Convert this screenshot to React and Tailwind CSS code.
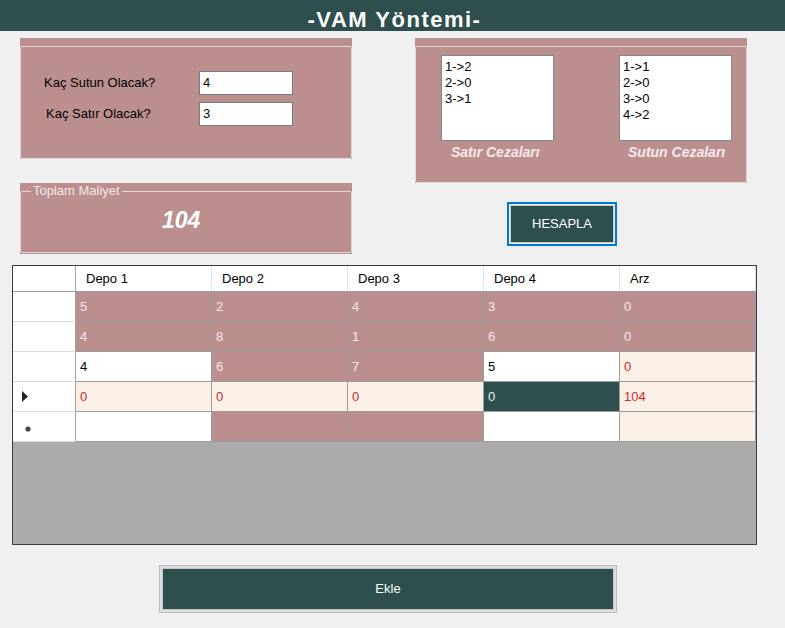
import React from "react";

const rows = [
  [["r", "5"], ["r", "2"], ["r", "4"], ["r", "3"], ["r", "0"]],
  [["r", "4"], ["r", "8"], ["r", "1"], ["r", "6"], ["r", "0"]],
  [["w", "4"], ["r", "6"], ["r", "7"], ["w", "5"], ["l", "0"]],
  [["l", "0"], ["l", "0"], ["l", "0"], ["d", "0"], ["l", "104"]],
  [["w", ""], ["r", ""], ["r", ""], ["w", ""], ["l", ""]],
];

const cellStyle = {
  r: "bg-[#bc8f8f] text-[#f5e9e9]",
  w: "bg-white text-black",
  l: "bg-[#faf0e6] text-[#d0282c]",
  d: "bg-[#2f4f4f] text-[#e6efef]",
};

function Cell({ kind, value }) {
  return (
    <div
      className={
        "w-[136px] h-[30px] shrink-0 border-r border-b border-[#9c9c9c] pl-[4px] flex items-center text-[13px] " +
        cellStyle[kind]
      }
    >
      {value}
    </div>
  );
}

function RowHeader({ mark }) {
  return (
    <div className="w-[63px] h-[30px] shrink-0 bg-white border-r border-r-[#a0a0a0] border-b border-b-[#dcdcdc] flex items-center">
      {mark === "arrow" && (
        <svg width="6" height="11" viewBox="0 0 6 11" className="ml-[9px]">
          <polygon points="0,0 6,5.5 0,11" fill="#222" />
        </svg>
      )}
      {mark === "star" && (
        <svg width="6" height="6" viewBox="0 0 6 6" className="ml-[12px] mt-[4px]">
          <circle cx="3" cy="3" r="2.6" fill="#444" />
        </svg>
      )}
    </div>
  );
}

export default function App() {
  return (
    <div className="w-[785px] h-[628px] bg-[#f0f0f0] font-['Liberation_Sans',Arial,sans-serif] text-[13px] text-black overflow-hidden">
      {/* Title */}
      <div className="h-[31px] bg-[#2f4f4f] flex justify-center">
        <div className="pt-[9px] leading-[22px] text-[22px] font-bold tracking-[1.5px] text-white pl-[4px]">
          -VAM Yöntemi-
        </div>
      </div>

      {/* Top section */}
      <div className="h-[234px] flex pt-[7px] pl-[20px]">
        {/* Left column */}
        <div className="w-[332px] flex flex-col">
          <div className="h-[121px] bg-[#bc8f8f] pt-[8px]">
            <div className="h-full border border-[#e2d6d6] rounded-[2px] pt-[24px] pl-[23px] flex flex-col gap-[7px]">
              <div className="flex items-center h-[24px]">
                <div className="w-[155px]">Kaç Sutun Olacak?</div>
                <div className="w-[94px] h-[24px] bg-white border border-[#7a7a7a] pl-[3px] flex items-center">4</div>
              </div>
              <div className="flex items-center h-[24px]">
                <div className="w-[155px] pl-[2px]">Kaç Satır Olacak?</div>
                <div className="w-[94px] h-[24px] bg-white border border-[#7a7a7a] pl-[3px] flex items-center">3</div>
              </div>
            </div>
          </div>

          <div className="mt-[24px] h-[71px] bg-[#bc8f8f] pt-[8px]">
            <div className="relative h-[62px] border border-[#e2d6d6] rounded-[2px] pt-[14px] pl-[141px]">
              <div className="absolute left-[10px] top-[-9px] px-[2px] bg-[#bc8f8f] text-[#f4e8e8] leading-[16px]">
                Toplam Maliyet
              </div>
              <div className="text-[23px] leading-[28px] font-bold italic text-white">104</div>
            </div>
          </div>
        </div>

        {/* Right column */}
        <div className="ml-[63px] w-[332px] flex flex-col">
          <div className="h-[145px] bg-[#bc8f8f] pt-[8px]">
            <div className="h-full border border-[#e2d6d6] rounded-[2px] pt-[8px] pl-[25px] flex gap-[65px]">
              <div className="flex flex-col">
                <div className="w-[113px] h-[86px] bg-white border border-[#828790] pt-[3px] pl-[3px] leading-[16px]">
                  <div>1-&gt;2</div>
                  <div>2-&gt;0</div>
                  <div>3-&gt;1</div>
                </div>
                <div className="pl-[10px] pt-[3px] text-[14px] leading-[16px] font-bold italic text-[#f7eaea]">
                  Satır Cezaları
                </div>
              </div>
              <div className="flex flex-col">
                <div className="w-[113px] h-[86px] bg-white border border-[#828790] pt-[3px] pl-[3px] leading-[16px]">
                  <div>1-&gt;1</div>
                  <div>2-&gt;0</div>
                  <div>3-&gt;0</div>
                  <div>4-&gt;2</div>
                </div>
                <div className="pl-[9px] pt-[3px] text-[14px] leading-[16px] font-bold italic text-[#f7eaea]">
                  Sutun Cezaları
                </div>
              </div>
            </div>
          </div>

          <div className="mt-[19px] ml-[92px] w-[110px] h-[44px] border-2 border-[#0078d7] p-[1px]">
            <div className="w-full h-full border border-[#c8cccc] bg-[#2f4f4f] flex items-center justify-center text-white">
              HESAPLA
            </div>
          </div>
        </div>
      </div>

      {/* Grid */}
      <div className="ml-[12px] w-[745px] h-[280px] border border-[#3c3c3c] bg-[#ababab] flex flex-col">
        <div className="flex h-[26px] bg-white border-b border-[#a0a0a0]">
          <div className="w-[63px] shrink-0 border-r border-[#a0a0a0]" />
          {["Depo 1", "Depo 2", "Depo 3", "Depo 4", "Arz"].map((h) => (
            <div
              key={h}
              className="w-[136px] shrink-0 border-r border-[#e3e3e3] pl-[10px] flex items-center"
            >
              {h}
            </div>
          ))}
        </div>
        {rows.map((r, i) => (
          <div key={i} className="flex">
            <RowHeader mark={i === 3 ? "arrow" : i === 4 ? "star" : null} />
            {r.map(([k, v], j) => (
              <Cell key={j} kind={k} value={v} />
            ))}
          </div>
        ))}
      </div>

      {/* Ekle button */}
      <div className="mt-[20px] ml-[159px] w-[458px] h-[48px] border border-[#bdbdbd] bg-[#dedede] p-[2px]">
        <div className="w-full h-full bg-[#2f4f4f] border border-[#c4c8c8] flex items-center justify-center text-white">
          Ekle
        </div>
      </div>
    </div>
  );
}
